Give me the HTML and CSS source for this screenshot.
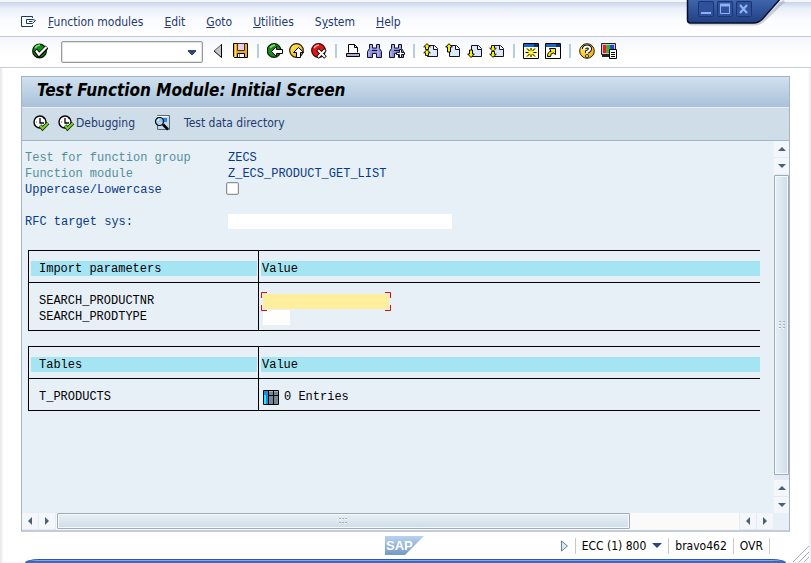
FILE: index.html
```html
<!DOCTYPE html>
<html lang="en">
<head>
<meta charset="utf-8">
<title>Test Function Module: Initial Screen</title>
<link rel="stylesheet" href="styles.css">
</head>
<body>
<svg class="defs" aria-hidden="true">
  <defs>
    <linearGradient id="gold" x1="0" y1="0" x2="1" y2="1"><stop offset="0" stop-color="#fff36a"/><stop offset="1" stop-color="#f0a400"/></linearGradient>
    <linearGradient id="logo" x1="0" y1="0" x2="0" y2="1"><stop offset="0" stop-color="#b9d2f0"/><stop offset="1" stop-color="#7399c4"/></linearGradient>
    <symbol id="page" viewBox="0 0 16 16">
      <path d="M4.500 2.500h7l3 3v8h-10z" fill="#dce9f8" stroke="#101028"/>
      <path d="M10.500 2.500v4h4" fill="#fff" stroke="#101028"/>
    </symbol>
    <symbol id="exec" viewBox="0 0 17 17">
      <circle cx="7" cy="7" r="6" fill="#fff" stroke="#000" stroke-width="1.400"/>
      <path d="M7 3v5h4" fill="none" stroke="#000" stroke-width="1.300"/>
      <path d="M3 7h1M7 11v1M10 4l1-1" stroke="#555"/>
      <path d="M7 10.500l2.500 3 5.500-5.500" fill="none" stroke="#102c00" stroke-width="3.600"/>
      <path d="M7 10.500l2.500 3 5.500-5.500" fill="none" stroke="#7ccb34" stroke-width="2"/>
    </symbol>
    <symbol id="binoc" viewBox="0 0 16 16">
      <path d="M2.500 1.500h3v3.500h4v-3.500h3v4l2 3v6h-5v-4h-4v4h-5v-6l2-3z" fill="#8990d6" stroke="#101038"/>
      <path d="M2 8.500v5M11 8.500v5M4 2v5M11 2v5" stroke="#c9cdf5"/>
      <path d="M5 7.500h5" stroke="#101038"/>
    </symbol>
    <symbol id="up" viewBox="0 0 8 7"><path d="M4 .7L7.300 3.800H5.500V6.500H2.500V3.800H.7z" fill="#fff000" stroke="#000" stroke-width=".9"/></symbol>
  </defs>
</svg>

<header class="menubar">
  <svg class="menu-icon" width="16" height="14" viewBox="0 0 16 14" fill="none" stroke="#1f3668">
    <path d="M11.500 3V1.500h-11v10h11V10"/><path d="M11.500 8.500H5.500v-4H12L14.500 5.500 11.500 8.500M8 6.500h3.500"/>
  </svg>
  <nav class="menu">
    <a href="#"><u>F</u>unction modules</a>
    <a href="#"><u>E</u>dit</a>
    <a href="#"><u>G</u>oto</a>
    <a href="#"><u>U</u>tilities</a>
    <a href="#">S<u>y</u>stem</a>
    <a href="#"><u>H</u>elp</a>
  </nav>
  <div class="window-controls">
    <svg class="window-tab" width="100" height="30" viewBox="0 0 100 30" aria-hidden="true">
      <defs><linearGradient id="tab" x1="0" y1="0" x2="0" y2="1"><stop offset="0" stop-color="#4168ad"/><stop offset="1" stop-color="#223f83"/></linearGradient></defs>
      <path d="M3 20q0 4 4 4h62q5 0 9-4L98 1" fill="none" stroke="#8d929c" stroke-opacity=".4" stroke-width="3"/>
      <path d="M1.500-2v22q0 3 3 3h63q5 0 9-4L95-2z" fill="url(#tab)" stroke="#080d2c" stroke-width="1.500"/>
    </svg>
    <button class="win-btn" aria-label="Minimize"><svg width="16" height="16" viewBox="0 0 16 16"><path d="M3 12h10" stroke="#8fb0f4" stroke-width="2"/></svg></button>
    <button class="win-btn" aria-label="Maximize"><svg width="16" height="16" viewBox="0 0 16 16"><path d="M3.500 4v8.500h9V4" fill="none" stroke="#8fb0f4"/><path d="M3 4h10" stroke="#8fb0f4" stroke-width="3"/></svg></button>
    <button class="win-btn" aria-label="Close"><svg width="16" height="16" viewBox="0 0 16 16"><path d="M4 4l7 8M11 4l-7 8" stroke="#8fb0f4" stroke-width="2.200"/></svg></button>
  </div>
</header>

<div class="toolbar">
  <button class="icon-btn" aria-label="Enter"><svg width="16" height="16" viewBox="0 0 16 16"><circle cx="7.500" cy="8" r="6.800" fill="#158a17" stroke="#001d00" stroke-width="1.300"/><path d="M3 5q2-3 5-3" stroke="#7fe36f" fill="none" stroke-width="1.500"/><path d="M3.500 7l3.500 5 8-8" fill="none" stroke="#000" stroke-width="4.200"/><path d="M4 7.500l3 4 7.500-7.500" fill="none" stroke="#fff" stroke-width="2.200"/></svg></button>
  <select class="command" aria-label="Command"><option></option></select>
  <button class="icon-btn back" aria-label="Close command field"><svg width="16" height="16" viewBox="0 0 16 16"><path d="M10.500 2v12L3 8z" fill="#c4c6c9"/><path d="M10.500 1v13.500M10.500 14.500L3 8" stroke="#000" fill="none"/><path d="M10.500 1.500L3 8" stroke="#555"/></svg></button>
  <button class="icon-btn" aria-label="Save"><svg width="16" height="16" viewBox="0 0 16 16"><path d="M.5.500h14v14h-13l-1-1z" fill="#efaa16" stroke="#000"/><path d="M2.500 1v13" stroke="#ffe27a"/><path d="M4.500.500h7v7h-7z" fill="#e6cff0" stroke="#4a3000"/><path d="M4.500 10.500h7v4h-7z" fill="#fff" stroke="#000"/><path d="M6.500 11v3" stroke="#777"/></svg></button>
  <span class="sep"></span>
  <button class="icon-btn" aria-label="Back"><svg width="16" height="16" viewBox="0 0 16 16"><circle cx="7" cy="7.500" r="6.800" fill="#198b18" stroke="#001d00" stroke-width="1.200"/><path d="M3 5q2-3 5-3" stroke="#7fe36f" fill="none" stroke-width="1.400"/><path d="M4.500 8.500l5-5v3h6v4h-6v3z" fill="#fff" stroke="#000"/></svg></button>
  <button class="icon-btn" aria-label="Exit"><svg width="16" height="16" viewBox="0 0 16 16"><circle cx="7.500" cy="7.500" r="6.800" fill="url(#gold)" stroke="#2b1b00" stroke-width="1.200"/><path d="M9.500 4.500l5 5h-3v5h-4v-5h-3z" fill="#fff" stroke="#000"/></svg></button>
  <button class="icon-btn" aria-label="Cancel"><svg width="16" height="16" viewBox="0 0 16 16"><circle cx="7.500" cy="7.500" r="6.800" fill="#dd1717" stroke="#350000" stroke-width="1.200"/><path d="M3 5q2-3 5-3" stroke="#ff9a8a" fill="none" stroke-width="1.400"/><path d="M6.500 6.500l8 8M14.500 6.500l-8 8" stroke="#000" stroke-width="3.600"/><path d="M7 7l7 7M14 7l-7 7" stroke="#fff" stroke-width="2"/></svg></button>
  <span class="sep"></span>
  <button class="icon-btn" aria-label="Print"><svg width="16" height="16" viewBox="0 0 16 16"><path d="M3.500 9.500v-8h6l3 3v5" fill="#fff" stroke="#000"/><path d="M9.500 1.500v3h3" fill="none" stroke="#000"/><path d="M1.500 10.500h13v3h-13z" fill="#a9aedd" stroke="#000"/></svg></button>
  <button class="icon-btn" aria-label="Find"><svg width="16" height="16"><use href="#binoc"/></svg></button>
  <button class="icon-btn" aria-label="Find next"><svg width="16" height="16" viewBox="0 0 16 16"><use href="#binoc" width="16" height="16"/><path d="M10.500 6.500h2v3h3v2h-3v3h-2v-3h-3v-2h3z" fill="#fff" stroke="#101038"/></svg></button>
  <span class="sep"></span>
  <button class="icon-btn" aria-label="First page"><svg width="16" height="16" viewBox="0 0 16 16"><use href="#page" width="16" height="16"/><use href="#up" x="0" y="0" width="8" height="7"/><use href="#up" x="0" y="6" width="8" height="7"/></svg></button>
  <button class="icon-btn" aria-label="Previous page"><svg width="16" height="16" viewBox="0 0 16 16"><use href="#page" width="16" height="16"/><path d="M4 .7L7.300 4H5.500v5h-3V4H.7z" fill="#fff000" stroke="#000"/></svg></button>
  <button class="icon-btn" aria-label="Next page"><svg width="16" height="16" viewBox="0 0 16 16"><use href="#page" width="16" height="16"/><path d="M4 14.500L7.300 11H5.500V7h-3v4H.7z" fill="#fff000" stroke="#000"/></svg></button>
  <button class="icon-btn" aria-label="Last page"><svg width="16" height="16" viewBox="0 0 16 16"><use href="#page" width="16" height="16"/><g transform="matrix(1 0 0 -1 0 15)"><use href="#up" x="0" y="0" width="8" height="7"/><use href="#up" x="0" y="6" width="8" height="7"/></g></svg></button>
  <span class="sep"></span>
  <button class="icon-btn" aria-label="New session"><svg width="16" height="16" viewBox="0 0 16 16"><path d="M.5.500h15v15H.5z" fill="#fffde4" stroke="#000"/><path d="M1 2.500h10" stroke="#1c63c8" stroke-width="3"/><path d="M11 2.500h4" stroke="#0b3277" stroke-width="3"/><path d="M2.500 9.500h11M8 5v9.500M4 5.500l8 8M12 5.500l-8 8" stroke="#fff33a" stroke-width="2"/><path d="M2.500 9.500h3M10.500 9.500h3M8 5v2.500M8 11.500V14M4 5.500l2.500 2.500M9.500 11l2.500 2.500M12 5.500L9.500 8M6.500 11L4 13.500" stroke="#000"/></svg></button>
  <button class="icon-btn" aria-label="Create shortcut"><svg width="16" height="16" viewBox="0 0 16 16"><path d="M.5.500h15v15H.5z" fill="#fff" stroke="#000"/><path d="M1 2.500h10" stroke="#1c63c8" stroke-width="3"/><path d="M11 2.500h4" stroke="#0b3277" stroke-width="3"/><path d="M2.500 13.500q0-5 3.500-5L4.500 5.500h6v6L8.500 10q-3 0-3 3.500z" fill="#ffe500" stroke="#000"/></svg></button>
  <span class="sep"></span>
  <button class="icon-btn" aria-label="Help"><svg width="16" height="16" viewBox="0 0 16 16"><circle cx="8" cy="8" r="7.300" fill="url(#gold)" stroke="#2b1b00"/><path d="M5 6q0-2.500 3-2.500t3 2.500q0 1.500-3 3v1" fill="none" stroke="#000" stroke-width="4"/><path d="M5 6.500q0-3 3-3t3 2.500q0 1.500-3 3v1.500" fill="none" stroke="#fff" stroke-width="2.200"/><circle cx="8" cy="13" r="1.500" fill="#fff" stroke="#000" stroke-width=".8"/></svg></button>
  <button class="icon-btn" aria-label="Customize local layout"><svg width="16" height="16" viewBox="0 0 16 16"><path d="M.5.500h14v11H.5z" fill="#c9c9d2" stroke="#222"/><path d="M2 2h3.500v8H2z" fill="#e32020"/><path d="M5.500 2H9v8H5.500z" fill="#28b828"/><path d="M9 2h4v8H9z" fill="#2343e0"/><path d="M1 13h8" stroke="#222" stroke-width="2"/><path d="M8.500 6.500h7v9h-7z" fill="#fff" stroke="#000"/><path d="M10 9.500h4M10 11.500h4M10 13.500h4" stroke="#000"/></svg></button>
</div>

<main class="panel">
  <h1 class="title">Test Function Module: Initial Screen</h1>
  <div class="actions">
    <button class="action" aria-label="Execute"><svg width="17" height="17"><use href="#exec"/></svg></button>
    <button class="action"><svg width="17" height="17"><use href="#exec"/></svg>Debugging</button>
    <button class="action action-find" aria-label="Display"><svg width="17" height="16" viewBox="0 0 17 16"><path d="M3.500.500h12v14h-12z" fill="#c4d8e8" stroke="#506a86"/><path d="M3 1.500h11" stroke="#fff"/><path d="M5 3h8v4H5z" fill="#2f86da"/><circle cx="5.500" cy="6.500" r="4" fill="#a9d7ff" fill-opacity=".8" stroke="#000" stroke-width="1.200"/><path d="M9 9.500l5 5" stroke="#000" stroke-width="2.600"/><path d="M3.500 6q.5-2 2-2" stroke="#fff" fill="none"/></svg></button>
    <button class="action">Test data directory</button>
  </div>

  <div class="work">
    <form class="content">
      <div class="row dim"><span class="name">Test for function group</span><span class="val">ZECS</span></div>
      <div class="row dim"><span class="name">Function module</span><span class="val">Z_ECS_PRODUCT_GET_LIST</span></div>
      <div class="row"><label class="name" for="case">Uppercase/Lowercase</label><input class="check" type="checkbox" id="case"></div>
      <div class="row spaced"><label class="name" for="rfc">RFC target sys:</label><input class="field rfc" type="text" id="rfc"></div>

      <table class="grid">
        <thead><tr><th class="first"><span>Import parameters</span></th><th><span>Value</span></th></tr></thead>
        <tbody>
          <tr>
            <td class="first"><label for="nr">SEARCH_PRODUCTNR</label></td>
            <td><span class="focus"><input class="field nr" type="text" id="nr"><svg class="corners" width="130" height="19" viewBox="0 0 130 19" fill="none"><path d="M.5 6V.500H6M124 .5h5.500V6M.5 13v5.500H6M124 18.500h5.500V13" stroke="#d31016"/></svg></span></td>
          </tr>
          <tr><td class="first"><label for="type">SEARCH_PRODTYPE</label></td><td><input class="field type" type="text" id="type"></td></tr>
        </tbody>
      </table>

      <table class="grid">
        <thead><tr><th class="first"><span>Tables</span></th><th><span>Value</span></th></tr></thead>
        <tbody>
          <tr><td class="first">T_PRODUCTS</td><td><span class="entries"><svg width="16" height="15" viewBox="0 0 16 15"><path d="M.5.500h15v14H.5z" fill="#748796" stroke="#000"/><path d="M1 1h4v13H1z" fill="#168de0"/><path d="M1 5h2v9H1z" fill="#33e2f4"/><path d="M5.500 1v13M10.500 1v13M5 5.500h10" stroke="#000"/><path d="M6 1.500h4M11 1.500h4" stroke="#a5b3bf"/></svg>0 Entries</span></td></tr>
        </tbody>
      </table>
    </form>

    <div class="vscroll">
      <button class="sb" aria-label="Scroll up"><i class="tri up"></i></button>
      <button class="sb" aria-label="Scroll down"><i class="tri down"></i></button>
      <div class="vthumb"><svg width="6" height="8" viewBox="0 0 6 8"><path d="M0 .5h2M4 .5h2M0 3.500h2M4 3.500h2M0 6.500h2M4 6.500h2" stroke="#9fb2c4"/><path d="M0 1.500h1M4 1.500h1M0 4.500h1M4 4.500h1M0 7.500h1M4 7.500h1" stroke="#fff"/></svg></div>
      <button class="sb" aria-label="Page up"><i class="tri up"></i></button>
      <button class="sb" aria-label="Page down"><i class="tri down"></i></button>
    </div>

    <div class="hscroll">
      <button class="sb" aria-label="Scroll left"><i class="tri left"></i></button>
      <button class="sb" aria-label="Scroll right"><i class="tri right"></i></button>
      <div class="track"><div class="hthumb"><svg width="8" height="6" viewBox="0 0 8 6"><path d="M0 .5h2M3 .5h2M6 .5h2M0 4.500h2M3 4.500h2M6 4.500h2" stroke="#9fb2c4"/><path d="M0 1.500h1M3 1.500h1M6 1.500h1M0 5.500h1M3 5.500h1M6 5.500h1" stroke="#fff"/></svg></div></div>
      <button class="sb" aria-label="Page left"><i class="tri left"></i></button>
      <button class="sb" aria-label="Page right"><i class="tri right"></i></button>
    </div>
  </div>
</main>

<footer class="status">
  <svg class="logo" width="39" height="19" viewBox="0 0 39 19" role="img" aria-label="SAP"><path d="M0 0h39L20 19H0z" fill="url(#logo)"/><text x="1" y="14" class="logo-text">SAP</text></svg>
  <div class="status-items">
    <svg class="expand" width="9" height="12" viewBox="0 0 9 12"><path d="M1.500 1v10L7.500 6z" fill="#dfe8f2" stroke="#6482a4"/></svg>
    <span class="cell">ECC (1) 800<i class="caret"></i></span>
    <span class="cell">bravo462</span>
    <span class="cell last">OVR</span>
  </div>
  <svg class="grip" width="18" height="18" viewBox="0 0 18 18"><path d="M1 17L17 1M7 17L17 7M12 17l5-5" stroke="#a3aabc"/></svg>
</footer>
<div class="edge"></div>
</body>
</html>
```
FILE: styles.css
```css
* { box-sizing: border-box; }

html, body { height: 100%; }

body {
  margin: 0;
  display: flex;
  flex-direction: column;
  position: relative;
  overflow: hidden;
  background: #fff;
  box-shadow: inset 2px 0 2px #e8e9ea, inset -2px 0 2px #eeeff1;
  color: #223a6e;
  font: 12px/16px "DejaVu Sans Condensed", "Noto Sans", sans-serif;
}

button {
  margin: 0;
  padding: 0;
  border: 0;
  background: none;
  color: inherit;
  font: inherit;
}

svg { display: block; flex: none; }

.defs { position: absolute; width: 0; height: 0; }

/* menu bar */
.menubar {
  flex: none;
  display: flex;
  align-items: center;
  gap: 11px;
  height: 37px;
  padding: 6px 21px 0;
  border-top: 2px solid #f3f6fc;
  border-bottom: 1px solid #bfc9db;
  background: linear-gradient(#c8d4ea, #e9eef8 18%, #fafbfe 50%, #fff);
}

.menu { display: flex; gap: 21px; }
.menu a { color: inherit; text-decoration: none; }

.window-controls {
  position: absolute;
  top: 0;
  right: 25px;
  display: flex;
  gap: 3px;
  width: 100px;
  padding: 1px 0 0 12px;
}

.window-tab { position: absolute; top: 0; left: 0; }

.win-btn {
  position: relative;
  width: 16px;
  height: 16px;
  border-radius: 2px;
  background: #2f519b;
  box-shadow: inset 0 0 0 1px #1b3474;
}

/* system toolbar */
.toolbar {
  flex: none;
  display: flex;
  align-items: center;
  gap: 6px;
  height: 31px;
  padding: 0 32px 2px;
  border-bottom: 1px solid #c9cfd9;
  background: linear-gradient(#f3f6fb, #fff 60%);
}

.icon-btn { width: 16px; height: 16px; flex: none; }
.back { margin-left: 2px; }

.sep {
  width: 2px;
  height: 14px;
  margin: 0 2px;
  background: #b4cde2;
}

.command {
  appearance: none;
  width: 142px;
  height: 22px;
  margin: 2px 0 0 7px;
  border: 1px solid #9a9a9a;
  border-radius: 2px;
  background:
    linear-gradient(45deg, transparent 50%, #2c4779 50%) right 10px center / 5px 5px no-repeat,
    linear-gradient(-45deg, transparent 50%, #2c4779 50%) right 5px center / 5px 5px no-repeat,
    #fff;
  background:
    conic-gradient(from -45deg at 50% 100%, #2c4779 90deg, transparent 0) right 5px center / 0 0 no-repeat,
    linear-gradient(to bottom left, #2c4779 50%, transparent 50%) right 10px center / 5px 5px no-repeat,
    linear-gradient(to bottom right, #2c4779 50%, transparent 50%) right 5px center / 5px 5px no-repeat,
    #fff;
  box-shadow: inset 0 0 0 1px #e1e3e6;
}

/* framed panel */
.panel {
  flex: 1;
  min-height: 0;
  display: flex;
  flex-direction: column;
  margin: 8px 21px 0;
  border: 1px solid #a5b5c8;
  border-bottom: 2px solid #c5ccd8;
}

.title {
  flex: none;
  height: 31px;
  margin: 0;
  padding: 0 15px;
  border-bottom: 1px solid #e6eff6;
  background: linear-gradient(#d0e1ee, #a9c1da);
  color: #000;
  font: italic bold 17px/27px "DejaVu Sans Condensed", "Noto Sans", sans-serif;
}

.actions {
  flex: none;
  display: flex;
  align-items: center;
  gap: 8px;
  height: 33px;
  padding: 0 11px 2px;
  border-bottom: 1px solid #a5b5c8;
  background: #cedde8;
}

.action { display: flex; align-items: center; gap: 1px; }
.action-find { margin: 0 5px 0 11px; }

.work {
  flex: 1;
  min-height: 0;
  display: grid;
  grid-template: minmax(0, 1fr) 17px / minmax(0, 1fr) 16px;
  background: #e8f0f7;
}

.content {
  margin: 0;
  padding: 9px 13px 0 3px;
  color: #000;
  font: 12px/16px "Liberation Mono", monospace;
}

.row { display: flex; align-items: center; height: 16px; color: #073b82; }
.row .name { width: 203px; }
.dim .name { color: #548f9b; }
.row.spaced { margin: 16px 0 20px; }

.check {
  appearance: none;
  width: 13px;
  height: 13px;
  margin: 0 0 4px -2px;
  border: 1px solid #8d8f92;
  border-radius: 2px;
  background: #fff;
  box-shadow: inset 0 0 0 1px #e4e5e6;
}

.field {
  display: block;
  height: 15px;
  padding: 0 1px;
  border: 0;
  outline: 0;
  background: #fff;
  font: inherit;
}

.rfc { width: 224px; margin-bottom: 2px; }
.nr { width: 126px; background: #ffee9c; }
.type { width: 27px; }

.focus { display: block; position: relative; }
.corners { position: absolute; top: -2px; left: -2px; pointer-events: none; }

.grid {
  width: calc(100% - 3px);
  margin: 0 0 15px 3px;
  border: solid #000;
  border-width: 1px 0 1px 1px;
  border-spacing: 0;
  table-layout: fixed;
}

.grid .first { width: 230px; border-right: 1px solid #000; }

.grid th {
  padding: 10px 0 6px 2px;
  border-bottom: 1px solid #000;
  font-weight: normal;
  text-align: left;
}

.grid th span { display: block; height: 15px; padding-left: 1px; background: #a5e5f3; line-height: 17px; }
.grid th.first { padding-right: 1px; }
.grid th.first span { padding-left: 8px; }

.grid td { height: 16px; padding: 0 0 0 4px; }
.grid td.first { padding-left: 10px; }
.grid tr:first-child td { height: 26px; padding-top: 10px; }
.grid tr:last-child td { padding-bottom: 5px; }

.entries { display: flex; align-items: center; gap: 5px; height: 16px; }

/* scroll bars */
.vscroll { display: flex; flex-direction: column; gap: 1px; border-left: 1px solid #eef2f6; background: #e4ebf2; }
.hscroll { display: flex; gap: 1px; background: #e4ebf2; }

.sb {
  flex: none;
  display: grid;
  place-items: center;
  width: 16px;
  height: 16px;
  background: #f3f7fb;
}

.vscroll .sb { width: 15px; }

.tri { border: 4px solid transparent; }
.up { border-top: 0; border-bottom-color: #4c6170; }
.down { border-bottom: 0; border-top-color: #4c6170; }
.left { border-left: 0; border-right-color: #4c6170; }
.right { border-right: 0; border-left-color: #4c6170; }

.vthumb, .hthumb {
  display: grid;
  place-items: center;
  border: 1px solid #9eacb8;
  border-radius: 1px;
  box-shadow: inset 0 0 0 1px #f5f9fc;
}

.vthumb { flex: 1; margin: 0 0 4px; background: linear-gradient(90deg, #e8f0f6, #cfdde8); }

.track { flex: 1; padding-left: 1px; background: #fafafa; }
.hthumb { width: 84%; height: 16px; background: linear-gradient(#e8f0f6, #cfdde8); }

/* status bar */
.status {
  flex: none;
  display: grid;
  grid-template-columns: 1fr auto 1fr;
  align-items: center;
  height: 27px;
  padding-right: 2px;
  color: #000;
}

.logo { grid-column: 2; }
.logo-text { fill: #fff; font: bold 13px "Liberation Sans", sans-serif; }

.status-items {
  display: flex;
  align-items: center;
  justify-content: flex-end;
  padding-right: 39px;
  white-space: nowrap;
}

.expand { margin-right: 6px; }

.cell {
  display: flex;
  align-items: center;
  gap: 6px;
  padding: 0 6px;
  border-left: 1px solid #c9c9c9;
}

.cell.last { border-right: 1px solid #c9c9c9; }

.caret { border: 5px solid transparent; border-top-color: #2c4779; border-bottom: 0; }

.grip { position: absolute; right: 1px; bottom: 0; }

.edge {
  flex: none;
  height: 4px;
  margin: 0 25px;
  border-top: 1px solid #2f56a4;
  border-radius: 14px 14px 0 0 / 4px 4px 0 0;
  background: linear-gradient(#86a6e4 33%, #3f68b9 34%);
}
```
